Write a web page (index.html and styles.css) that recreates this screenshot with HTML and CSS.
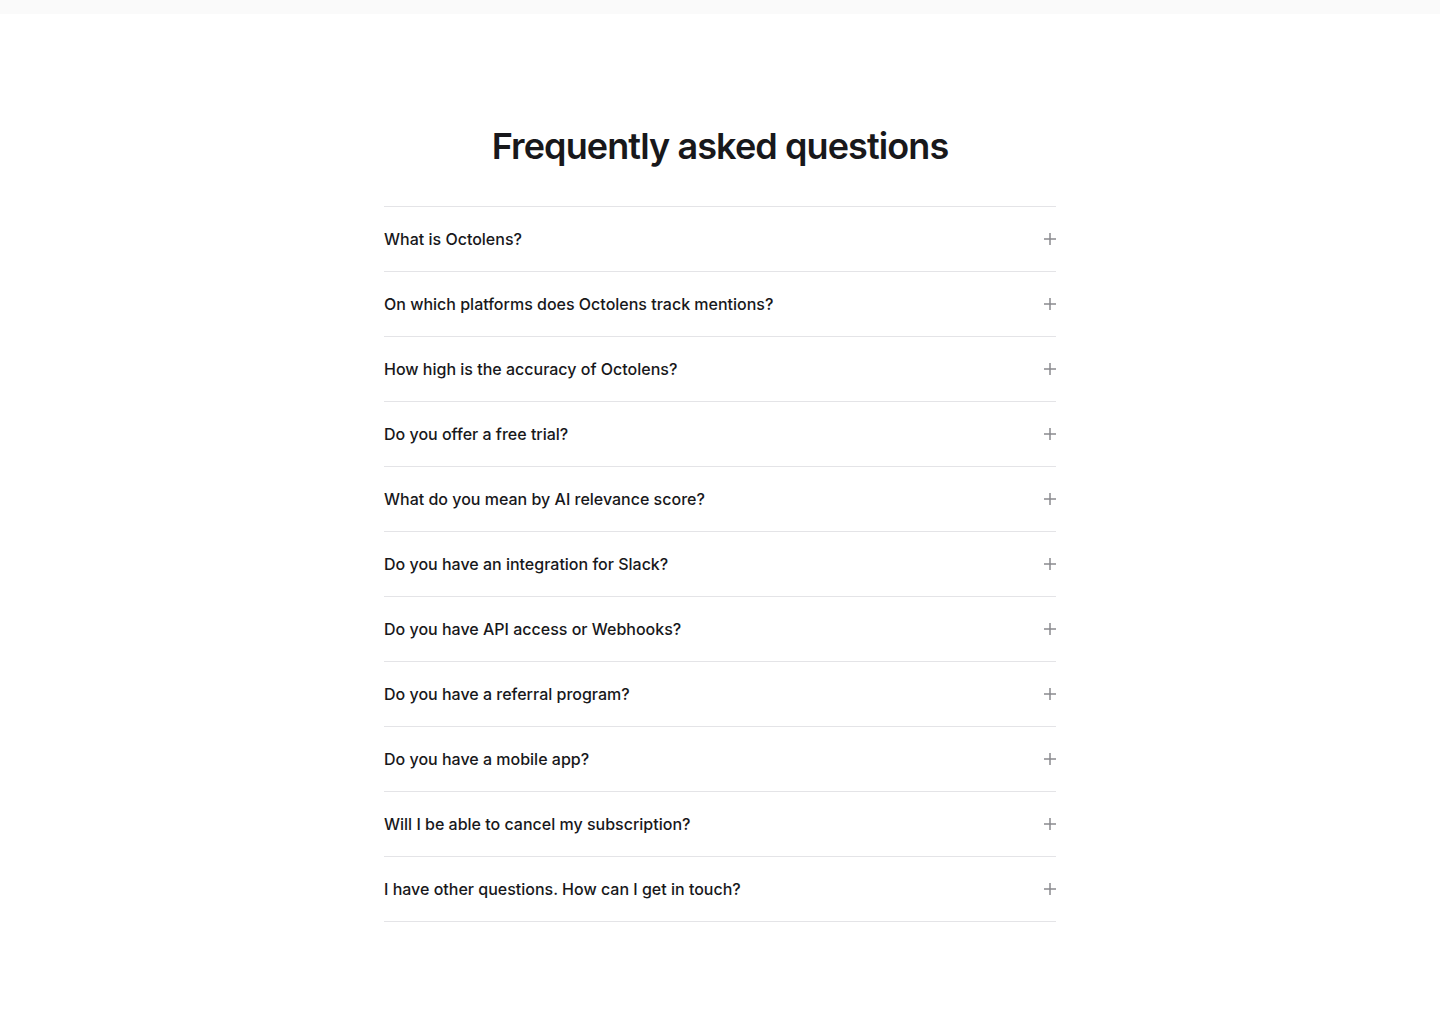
FILE: index.html
```html
<!DOCTYPE html>
<html>
	<head>
		<meta charset="UTF-8">
		<title>FAQ</title>
		<link rel="stylesheet" href="styles.css">
	</head>
	<body>
		<div class="topbar"></div>
		<section class="faq">
			<h2 class="faq-title">Frequently asked questions</h2>
			<div class="faq-list">
				<div class="faq-item"><span>What is Octolens?</span><svg class="plus" viewBox="0 0 12 12"><path d="M6 0v12M0 6h12"/></svg></div>
				<div class="faq-item"><span>On which platforms does Octolens track mentions?</span><svg class="plus" viewBox="0 0 12 12"><path d="M6 0v12M0 6h12"/></svg></div>
				<div class="faq-item"><span>How high is the accuracy of Octolens?</span><svg class="plus" viewBox="0 0 12 12"><path d="M6 0v12M0 6h12"/></svg></div>
				<div class="faq-item"><span>Do you offer a free trial?</span><svg class="plus" viewBox="0 0 12 12"><path d="M6 0v12M0 6h12"/></svg></div>
				<div class="faq-item"><span>What do you mean by AI relevance score?</span><svg class="plus" viewBox="0 0 12 12"><path d="M6 0v12M0 6h12"/></svg></div>
				<div class="faq-item"><span>Do you have an integration for Slack?</span><svg class="plus" viewBox="0 0 12 12"><path d="M6 0v12M0 6h12"/></svg></div>
				<div class="faq-item"><span>Do you have API access or Webhooks?</span><svg class="plus" viewBox="0 0 12 12"><path d="M6 0v12M0 6h12"/></svg></div>
				<div class="faq-item"><span>Do you have a referral program?</span><svg class="plus" viewBox="0 0 12 12"><path d="M6 0v12M0 6h12"/></svg></div>
				<div class="faq-item"><span>Do you have a mobile app?</span><svg class="plus" viewBox="0 0 12 12"><path d="M6 0v12M0 6h12"/></svg></div>
				<div class="faq-item"><span>Will I be able to cancel my subscription?</span><svg class="plus" viewBox="0 0 12 12"><path d="M6 0v12M0 6h12"/></svg></div>
				<div class="faq-item"><span>I have other questions. How can I get in touch?</span><svg class="plus" viewBox="0 0 12 12"><path d="M6 0v12M0 6h12"/></svg></div>
			</div>
		</section>
	</body>
</html>
```

FILE: styles.css
```css
* {
	margin: 0;
	padding: 0;
	box-sizing: border-box;
}
body {
	font-family: Inter, "Liberation Sans", sans-serif;
	color: #18181b;
	background: #fff;
}
.topbar {
	height: 14px;
	background-color: #fafafa;
}
.faq {
	width: 672px;
	margin: 0 auto;
	padding-top: 112px;
}
.faq-title {
	font-size: 36px;
	line-height: 40px;
	font-weight: 600;
	letter-spacing: -0.025em;
	text-align: center;
	margin-bottom: 40px;
}
.faq-list {
	border-top: 1px solid #e4e4e7;
}
.faq-item {
	display: flex;
	justify-content: space-between;
	align-items: center;
	padding: 20px 0;
	line-height: 24px;
	font-size: 16px;
	font-weight: 500;
	border-bottom: 1px solid #e4e4e7;
}
.plus {
	width: 12px;
	height: 12px;
	fill: none;
	stroke: #8a8a8f;
	stroke-width: 1.5;
}
```
